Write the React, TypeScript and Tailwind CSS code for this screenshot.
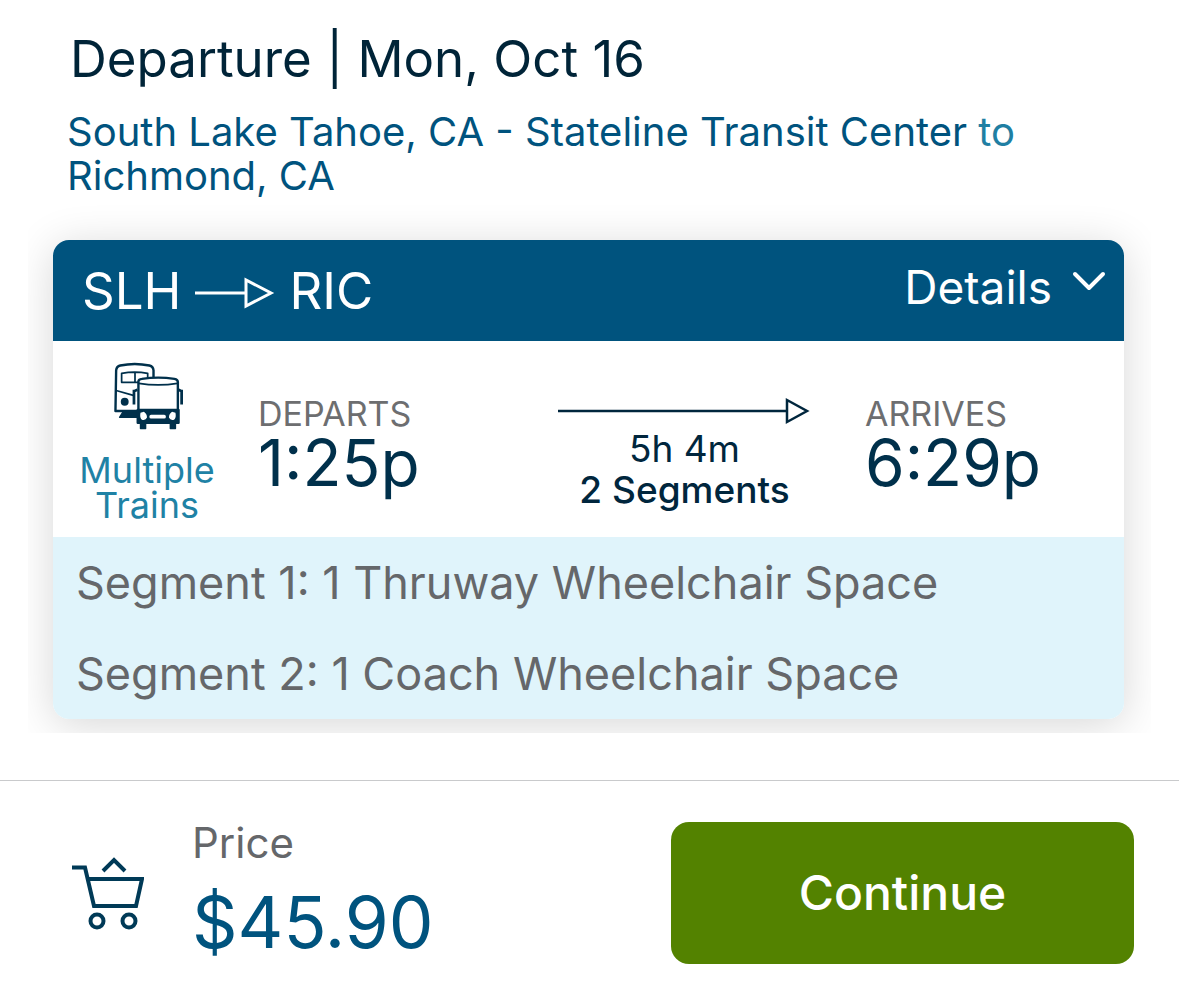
import React from 'react';

const segments = [
  { id: 1, label: 'Segment 1: 1 Thruway Wheelchair Space' },
  { id: 2, label: 'Segment 2: 1 Coach Wheelchair Space' },
];

function TrainBusIcon() {
  return (
    <svg viewBox="157 36 210 201" className="w-[72px] h-[69px]" fill="none" stroke="#00304b" strokeWidth="7" strokeLinejoin="round" aria-hidden="true">
      {/* Train */}
      <path d="M236 179H170L172 60Q173 49 184 46Q226 37 269 46Q280 49 281 60V82" />
      <path d="M238 95H188V69Q226 62 264 69V82M227 66V93" strokeWidth="5" />
      <path d="M172 119L222 133" strokeWidth="5" />
      <circle cx="197" cy="152" r="8" fill="#00304b" />
      <path d="M192 181H236V197H182Z" fill="#00304b" strokeWidth="4" />
      {/* Bus */}
      <path d="M237 178V92Q238 86 247 85Q295 78 342 85Q352 87 352 94V178Z" fill="#fff" />
      <path d="M238 98Q295 107 351 98" strokeWidth="5" />
      <path d="M235 176H354V213H235Z" fill="#00304b" />
      <path d="M243 213H258V230H243ZM330 213H345V230H330Z" fill="#00304b" strokeWidth="4" />
      <path d="M224 117V160M224 121L234 117M363 117V160M363 121L354 117" strokeWidth="8" />
      <rect x="269" y="190" width="48" height="11" rx="5" fill="#fff" stroke="none" />
      <path d="M243 184L253 181Q262 187 262 198Q258 207 247 204Q240 199 243 184ZM345 184L335 181Q326 187 326 198Q330 207 341 204Q348 199 345 184Z" fill="#fff" stroke="none" />
    </svg>
  );
}

function CartIcon() {
  return (
    <svg viewBox="0 0 72 74" className="w-[72px] h-[74px] shrink-0" fill="none" stroke="#003a57" strokeWidth="4" aria-hidden="true">
      <path d="M0 10.5H13L22 49H64L70 22H16" />
      <path d="M31 14L42 3L53 14" />
      <circle cx="25" cy="64" r="6.5" />
      <circle cx="57" cy="64" r="6.5" />
    </svg>
  );
}

function TripCard() {
  return (
    <section className="rounded-2xl bg-white shadow-[0_6px_44px_rgba(0,0,0,0.16)]">
      <header className="flex items-center justify-between h-[101px] rounded-t-2xl bg-[#00537e] text-white pl-[29px] pr-[18px]">
        <h2 className="flex items-center gap-[14px] text-[51px] leading-none">
          SLH
          <svg viewBox="0 0 80 32" className="w-[80px] h-8 mt-1" fill="none" stroke="currentColor" strokeWidth="3" aria-hidden="true">
            <path d="M0 16H50M51 3V29L76 16Z" />
          </svg>
          RIC
        </h2>
        <button type="button" className="flex items-center gap-5 pb-2 text-[46px] leading-none">
          Details
          <svg viewBox="0 0 34 22" className="w-[34px] h-[22px] mb-3" fill="none" stroke="currentColor" strokeWidth="4" strokeLinecap="round" strokeLinejoin="round" aria-hidden="true">
            <path d="M3 4L17 18L31 4" />
          </svg>
        </button>
      </header>

      <div className="flex h-[196px]">
        <div className="flex flex-col items-center w-[188px] pt-[21px]">
          <TrainBusIcon />
          <a href="#trains" className="mt-[22px] text-center text-[36px] leading-[35px] text-[#1f82a5]">
            Multiple<br />Trains
          </a>
        </div>
        <div className="flex flex-1 justify-between pl-[17px] pr-[83px]">
          <div className="w-[246px] pt-[55px]">
            <p className="text-[34px] leading-9 text-[#6d6e70]">DEPARTS</p>
            <p className="text-[64px] leading-[62px] text-[#00304b]">1:25p</p>
          </div>
          <div className="flex flex-col items-center pt-14 text-[#00263d]">
            <svg viewBox="0 0 252 28" className="w-[252px] h-7" fill="none" stroke="currentColor" strokeWidth="2.5" aria-hidden="true">
              <path d="M0 14H228M229 3V25L249 14Z" />
            </svg>
            <p className="mt-[3px] text-[37px] leading-[41px]">5h 4m</p>
            <p className="text-[37px] leading-[41px] font-medium">2 Segments</p>
          </div>
          <div className="pt-[55px]">
            <p className="text-[34px] leading-9 text-[#6d6e70]">ARRIVES</p>
            <p className="text-[64px] leading-[62px] text-[#00304b]">6:29p</p>
          </div>
        </div>
      </div>

      <ul className="rounded-b-2xl bg-[#e0f4fb] pl-[23px] text-[45px] leading-[91px] text-[#65676a]">
        {segments.map((segment) => (
          <li key={segment.id}>{segment.label}</li>
        ))}
      </ul>
    </section>
  );
}

export default function App() {
  return (
    <div className="min-h-screen bg-white font-[Inter,sans-serif]">
      <main className="pt-7">
        <div className="px-[67px]">
          <h1 className="pl-[3px] text-[51px] leading-[62px] text-[#002438]">Departure | Mon, Oct 16</h1>
          <p className="mt-5 text-[40px] leading-[44px] text-[#00537e]">
            South Lake Tahoe, CA - Stateline Transit Center <span className="text-[#1f7fa3]">to</span> Richmond, CA
          </p>
        </div>
        <div className="mx-7 overflow-hidden pt-[42px] pr-[27px] pb-[14px] pl-[25px]">
          <TripCard />
        </div>
      </main>

      <footer className="mt-[47px] flex justify-between border-t border-[#c9cacc] pt-[41px] pr-[45px] pb-[38px] pl-[72px]">
        <div className="flex gap-12">
          <div className="pt-[35px]">
            <CartIcon />
          </div>
          <div>
            <p className="text-[42px] leading-[42px] text-[#65676a]">Price</p>
            <p className="mt-[18px] text-[71px] leading-[80px] text-[#00537e]">$45.90</p>
          </div>
        </div>
        <button type="button" className="h-[142px] w-[463px] rounded-[18px] bg-[#538200] text-[48px] font-medium text-white">
          Continue
        </button>
      </footer>
    </div>
  );
}
